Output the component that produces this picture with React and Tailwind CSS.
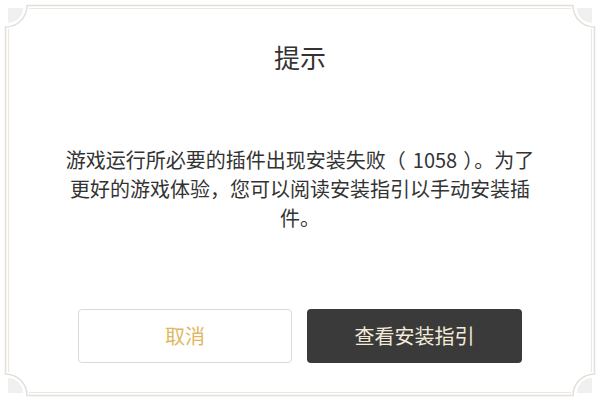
import React from "react";

function Frame() {
  const c = "#e4e0d9";
  return (
    <svg className="absolute inset-0 pointer-events-none" width="600" height="401" viewBox="0 0 600 401">
      <path d="M8 8 L23 8 A15 15 0 0 1 8 23 Z" fill="#f0f0f0" />
      <path d="M592 8 L577 8 A15 15 0 0 0 592 23 Z" fill="#f0f0f0" />
      <path d="M8 393 L23 393 A15 15 0 0 0 8 378 Z" fill="#f0f0f0" />
      <path d="M592 393 L577 393 A15 15 0 0 1 592 378 Z" fill="#f0f0f0" />
      <path
        d="M27 5.5 L573 5.5 A21.5 21.5 0 0 0 594.5 27 L594.5 374 A21.5 21.5 0 0 0 573 395.5 L27 395.5 A21.5 21.5 0 0 0 5.5 374 L5.5 27 A21.5 21.5 0 0 0 27 5.5 Z"
        fill="none"
        stroke={c}
        strokeWidth="1.6"
      />
      <path d="M29 8.5 L571 8.5" stroke="#ebe8e3" strokeWidth="1.2" />
      <path d="M29 392.5 L571 392.5" stroke="#ebe8e3" strokeWidth="1.2" />
      <path d="M8.5 29 L8.5 372" stroke="#ebe8e3" strokeWidth="1.2" />
      <path d="M591.5 29 L591.5 372" stroke="#ebe8e3" strokeWidth="1.2" />
    </svg>
  );
}

export default function App() {
  return (
    <div
      className="relative w-[600px] h-[401px] bg-white overflow-hidden"
      style={{ fontFamily: '"Noto Sans CJK SC", "Noto Sans", sans-serif' }}
    >
      <Frame />
      <div className="relative flex flex-col items-center h-full pt-[40px] pb-[38px]">
        <h1 className="text-[26px] leading-[34px] text-[#333333] font-normal">提示</h1>
        <p className="mt-[71px] w-[479px] text-center text-[20px] leading-[29px] text-[#333333]">
          游戏运行所必要的插件出现安装失败<span className="pr-[7px]">（</span>1058<span className="pl-[6px] pr-[1px]">）</span>。为了更好的游戏体验，您可以阅读安装指引以手动安装插件。
        </p>
        <div className="mt-auto flex gap-[15px]">
          <button className="w-[214px] h-[54px] rounded-[4px] border border-[#d9d9d9] bg-white text-[20px] text-[#dfb75f]">
            取消
          </button>
          <button className="w-[215px] h-[54px] rounded-[4px] bg-[#3a3a3a] text-[20px] text-[#f3ead8]">
            查看安装指引
          </button>
        </div>
      </div>
    </div>
  );
}
